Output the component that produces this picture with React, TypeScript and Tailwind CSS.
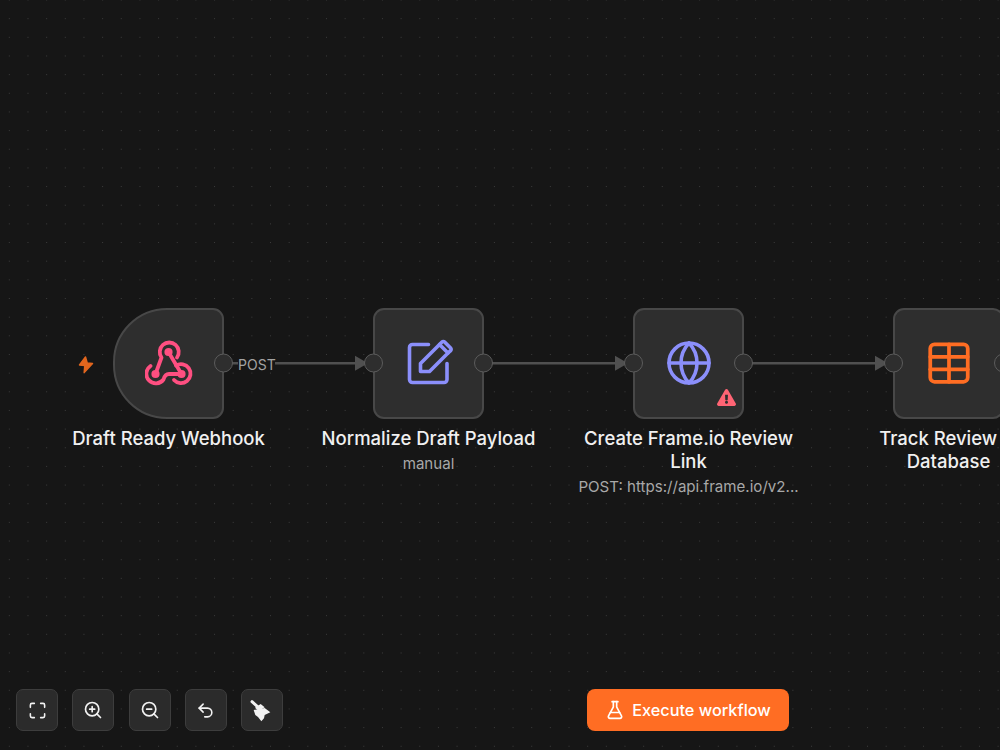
import { FlaskConical, Globe, Maximize, Table, Undo2, ZoomIn, ZoomOut } from "lucide-react";
import type { ReactNode } from "react";
import { FaExclamationTriangle } from "react-icons/fa";

function WebhookIcon() {
    return (
        <svg width="48" height="48" viewBox="0 0 48 48" fill="none" stroke="#ff4f81" strokeWidth="3.800" strokeLinecap="round" strokeLinejoin="round">
            <path d="M32 18.500A9.500 9.500 0 1 0 16.500 18.500L10.500 35" />
            <path d="M23.500 13 36.500 35" />
            <path d="M5.500 27A9.500 9.500 0 1 0 18.500 40.500Q20 35 24 35H36.500" />
            <path d="M29 41A9.500 9.500 0 1 0 31 26.500" />
            <circle cx="23.500" cy="13" r="2.200" fill="#ff4f81" />
            <circle cx="10.500" cy="35" r="2.200" fill="#ff4f81" />
            <circle cx="36.500" cy="35" r="2.200" fill="#ff4f81" />
        </svg>
    );
}

function EditIcon() {
    return (
        <svg width="48" height="48" viewBox="0 0 48 48" fill="none" stroke="#8b8ffb" strokeWidth="3.600" strokeLinecap="round" strokeLinejoin="round">
            <path d="M23.500 5.500H7.500a3 3 0 0 0-3 3v32a3 3 0 0 0 3 3h31.500a3 3 0 0 0 3-3V24.500" />
            <path d="M15.500 32.500V24.500L34.500 5.500 43 14 24.500 32.500z" />
            <path d="M34.500 5.500l2.500-2.500a1.800 1.800 0 0 1 2.600 0l6 6a1.800 1.800 0 0 1 0 2.600L43 14" />
        </svg>
    );
}

function Bolt() {
    return (
        <svg width="18" height="20" viewBox="0 0 18 20" fill="#e2661e" stroke="#e2661e" strokeWidth="1.500" strokeLinejoin="round">
            <path d="M8.500 2 2.500 10 7.800 10.500 7.200 17.500 15.500 8.500 10.200 8z" />
        </svg>
    );
}

function Broom() {
    return (
        <svg width="36" height="30" viewBox="0 0 108 90" fill="#f2f2f2">
            <path d="M24 20 44 38" stroke="#f2f2f2" strokeWidth="9" strokeLinecap="round" />
            <path d="M33 38 50 27 62 37 44 48z" />
            <path d="M29 45 62 39 79 52 62 60 60 70 52 79 42 66 34 60z" />
        </svg>
    );
}

type NodeProps = {
    left: string;
    icon: ReactNode;
    title: ReactNode;
    sub?: string;
    shape?: string;
    warn?: boolean;
    input?: boolean;
    children?: ReactNode;
};

function Handle({ side }: { side: string }) {
    return <div className={`absolute top-1/2 h-[19px] w-[19px] -translate-y-1/2 rounded-full border-[1.5px] border-[#5c5c5c] bg-[#2e2e2e] ${side}`} />;
}

// node = box + label, only the box column itself sits on the canvas
function Node({ left, icon, title, sub, shape = "rounded-[11px]", warn, input = true, children }: NodeProps) {
    return (
        <div className={`absolute top-[307.700px] flex w-[280px] flex-col items-center ${left}`}>
            <div className={`relative flex h-[111px] w-[111px] items-center justify-center border-2 border-[#484848] bg-[#2e2e2e] ${shape}`}>
                {icon}
                {warn && <FaExclamationTriangle className="absolute right-[6px] bottom-[10px] text-[#ff6474]" size={19} />}
                {input && <Handle side="left-[-11px]" />}
                <Handle side="right-[-11px]" />
                {children}
            </div>
            <div className="mt-[8px] text-center text-[18.500px] leading-[23.200px] font-medium text-[#f0f0f0]">{title}</div>
            {sub && <div className="mt-[3px] text-[15.100px] leading-[22px] text-[#a8a8a8]">{sub}</div>}
        </div>
    );
}

function ToolButton({ children }: { children: ReactNode }) {
    return (
        <button className="flex h-[42px] w-[42px] items-center justify-center rounded-[7px] border border-[#3d3d3d] bg-[#2b2b2b] text-[#f2f2f2]">
            {children}
        </button>
    );
}

export default function App() {
    return (
        <div className="relative flex h-[750px] w-[1000px] items-end overflow-hidden bg-[#161616] bg-[radial-gradient(#3c3c3c_0.8px,transparent_0.9px)] bg-[size:18.67px_18.67px] bg-[position:0px_-9.330px] pb-[19px] pl-[16px] font-['Inter',sans-serif]">
            <svg className="absolute inset-0" width="1000" height="750" fill="none">
                <path d="M232 363.300h6M275 363.300h82M492 363.300h125M752 363.300h125" stroke="#505050" strokeWidth="2.500" />
                <path d="M355 355.800l13 7.500-13 7.500zM615 355.800l13 7.500-13 7.500zM875 355.800l13 7.500-13 7.500z" fill="#505050" />
            </svg>

            <Node
                left="left-[28.500px]"
                shape="rounded-l-[54px] rounded-r-[11px]"
                input={false}
                icon={<WebhookIcon />}
                title="Draft Ready Webhook"
            >
                <div className="absolute top-[45px] left-[-38px]">
                    <Bolt />
                </div>
                <span className="absolute top-[46px] left-[123px] text-[14px] leading-[18px] text-[#a3a3a3]">POST</span>
            </Node>
            <Node left="left-[288.500px]" icon={<EditIcon />} title="Normalize Draft Payload" sub="manual" />
            <Node
                left="left-[548.500px]"
                warn
                icon={<Globe size={48} strokeWidth={1.800} className="text-[#8b8ffb]" />}
                title={<>Create Frame.io Review<br />Link</>}
                sub="POST: https://api.frame.io/v2..."
            />
            <Node
                left="left-[808.500px]"
                icon={<Table size={50} strokeWidth={1.800} className="text-[#ff6d23]" />}
                title={<>Track Review in<br />Database</>}
            />

            <div className="relative flex gap-[14.250px]">
                <ToolButton><Maximize size={19} /></ToolButton>
                <ToolButton><ZoomIn size={20} /></ToolButton>
                <ToolButton><ZoomOut size={20} /></ToolButton>
                <ToolButton><Undo2 size={19} /></ToolButton>
                <ToolButton><Broom /></ToolButton>
            </div>

            <button className="relative ml-[304px] flex h-[42px] w-[202px] items-center justify-center gap-[7px] rounded-[8px] bg-[#ff6d23] text-[16.300px] font-medium text-white">
                <FlaskConical size={20} />
                Execute workflow
            </button>
        </div>
    );
}
